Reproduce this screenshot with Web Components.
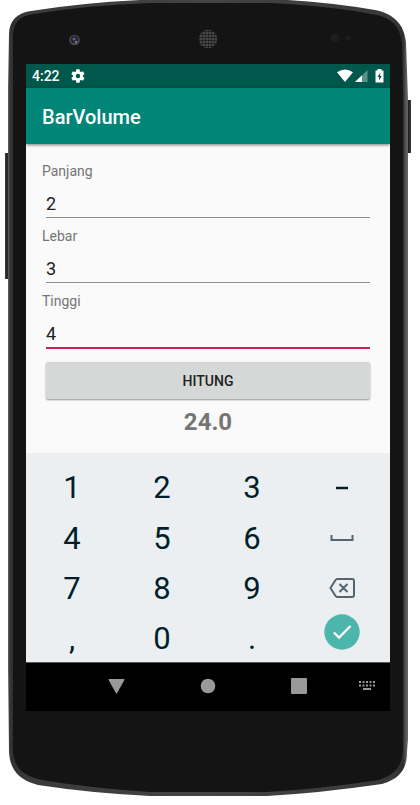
<!DOCTYPE html>
<html lang="id">
<head>
<meta charset="utf-8">
<meta name="viewport" content="width=device-width, initial-scale=1">
<title>BarVolume</title>
<style>
body { margin: 0; background: #fff; font-family: Roboto, "Liberation Sans", sans-serif; }
</style>
</head>
<body>
<device-frame>
  <status-bar time="4:22"></status-bar>
  <app-bar>BarVolume</app-bar>
  <volume-form>
    <text-field label="Panjang" value="2"></text-field>
    <text-field label="Lebar" value="3"></text-field>
    <text-field label="Tinggi" value="4" active></text-field>
  </volume-form>
  <number-pad></number-pad>
  <nav-bar></nav-bar>
</device-frame>
<script>
const define = (name, html, setup) => {
  const template = document.createElement('template');
  template.innerHTML = html;
  customElements.define(name, class extends HTMLElement {
    constructor() {
      super();
      this.attachShadow({ mode: 'open' }).append(template.content.cloneNode(true));
    }
    connectedCallback() { if (setup) setup(this, this.shadowRoot); }
  });
};

define('device-frame', `
<style>
:host { display: block; position: relative; box-sizing: border-box; padding: 64px 30px 94px 26px; }
.shell { position: absolute; inset: 0; width: 100%; height: 100%; z-index: -1; }
main { display: flex; flex-direction: column; background: #fafafa; }
</style>
<svg class="shell" viewBox="0 0 420 805" preserveAspectRatio="none" aria-hidden="true">
  <defs>
    <linearGradient id="side"><stop offset="0" stop-color="#3b3c3d"/><stop offset=".5" stop-color="#222325"/><stop offset="1" stop-color="#3b3c3d"/></linearGradient>
    <linearGradient id="rim" gradientUnits="userSpaceOnUse" x1="8" y1="0" x2="408" y2="0">
      <stop offset="0" stop-color="#666"/><stop offset=".004" stop-color="#3a3a3a"/><stop offset=".01" stop-color="#303030"/>
      <stop offset=".05" stop-color="#3a3a3a"/><stop offset=".5" stop-color="#444"/><stop offset=".96" stop-color="#383838"/>
      <stop offset=".988" stop-color="#2e2e30"/><stop offset=".994" stop-color="#545458"/><stop offset="1" stop-color="#666"/>
    </linearGradient>
    <pattern id="mesh" width="3" height="3" patternUnits="userSpaceOnUse"><rect width="3" height="3" fill="#4a4a4a"/><circle cx="1.5" cy="1.5" r="1.1" fill="#111"/></pattern>
  </defs>
  <path d="M5 153h4v126H5z" fill="url(#side)"/>
  <path d="M406 100h5v53h-5z" fill="url(#side)"/>
  <path d="M8 87L9 34C9 22 16 13 31 11Q80 3 140 0H288Q335 3 375 10C395 14 404 25 406 42L408 100V739L407 752C407 767 402 778 382 784Q320 793 267 796H150Q90 793 38 785C19 780 10 770 9 752L8 667Z" fill="url(#rim)"/>
  <path d="M13 88V38C13 23 19 16 34 14Q90 5 150 3L270 3Q330 6 371 14C394 17 401 28 402 47L403 100V742C403 764 399 773 379 780Q320 789 267 792H150Q90 788 42 780C23 776 14 768 13 750Z" fill="#141414"/>
  <circle cx="74.5" cy="40" r="5.3" fill="#4b4b4d"/><circle cx="74.5" cy="39.5" r="3.7" fill="#222239"/><circle cx="74" cy="39" r="1.5" fill="#5c5c97"/><circle cx="76" cy="42" r="1.2" fill="#777"/>
  <circle cx="208" cy="39" r="9.3" fill="url(#mesh)"/>
  <circle cx="335" cy="38" r="4" fill="#1e1e1f"/><circle cx="348" cy="38" r="2.5" fill="#1d1d1e"/>
</svg>
<main><slot></slot></main>`);

define('status-bar', `
<style>
:host { display: flex; align-items: center; height: 24px; padding: 0 6px; background: #00574b; color: #fff; font-size: 14px; font-weight: 500; }
svg { display: block; fill: #fff; }
.gear { margin-left: 10px; margin-right: auto; }
.signal { margin: 0 7px 0 2px; }
</style>
<span id="time"></span>
<svg class="gear" width="16" height="16" viewBox="0 0 24 24" role="img" aria-label="Settings"><path fill-rule="evenodd" d="M19.4 13a7.800 7.800 0 0 0 0-2l2.100-1.600c.2-.2.3-.5.1-.7l-2-3.400c-.1-.2-.4-.3-.6-.2l-2.500 1a7.300 7.300 0 0 0-1.700-1L14.400 2.400c0-.2-.2-.4-.5-.4h-4c-.2 0-.4.200-.5.400L9 5.100c-.6.300-1.200.6-1.700 1l-2.500-1c-.2-.1-.5 0-.6.200l-2 3.400c-.1.200 0 .5.100.7L4.500 11a7.800 7.800 0 0 0 0 2l-2.200 1.600c-.2.200-.2.500-.1.700l2 3.400c.1.200.4.300.6.200l2.500-1c.5.400 1.100.7 1.700 1l.4 2.700c.1.200.3.400.5.400h4c.3 0 .5-.2.500-.4l.4-2.700c.6-.3 1.200-.6 1.700-1l2.500 1c.2.100.5 0 .6-.2l2-3.400c.2-.2.1-.5-.1-.7L19.400 13zM12 8.700a3.300 3.300 0 1 1 0 6.600 3.300 3.300 0 0 1 0-6.600z"/></svg>
<svg width="16" height="14" viewBox="0 0 16 14" role="img" aria-label="Wi-Fi"><path d="M0 3.200Q8-2 16 3.200L8 13Z"/></svg>
<svg class="signal" width="13" height="14" viewBox="0 0 13 14" role="img" aria-label="Signal"><path d="M12.500 1V13H0Z" opacity=".35"/><path d="M7 6.300V13H0Z"/></svg>
<svg width="9" height="14" viewBox="0 0 9 14" role="img" aria-label="Battery charging"><path fill-rule="evenodd" d="M2.500 0h4v1.500H8q.5 0 .5.500v11q0 .5-.5.500H1q-.5 0-.5-.5V2q0-.5.500-.5h1.500zM5.200 3.800L2.500 8h1.600v3.600L6.800 7H5.200z"/></svg>`,
(host, root) => { root.getElementById('time').textContent = host.getAttribute('time'); });

define('app-bar', `
<style>
:host { display: flex; align-items: center; box-sizing: border-box; height: 56px; padding: 2px 16px 0; background: #008577; color: #fff; box-shadow: 0 1px 3px rgba(0,0,0,.5); z-index: 1; }
h1 { margin: 0; font-size: 20px; line-height: 24px; font-weight: 500; }
</style>
<h1><slot></slot></h1>`);

define('text-field', `
<style>
:host { display: block; }
label { display: block; font-size: 14px; line-height: 20px; color: #757575; }
.box { padding: 0 4px 8px; }
input { display: block; box-sizing: border-box; width: 100%; height: 37px; margin: 0; padding: 8px 0 0; border: 0; border-bottom: 1px solid #8f8f8f; border-radius: 0; outline: 0; background: none; font: 18px/24px Roboto, "Liberation Sans", sans-serif; color: #212121; }
:host([active]) .box { padding-bottom: 7px; }
:host([active]) input { height: 38px; border-bottom: 2px solid #d81b60; }
</style>
<label for="value"></label>
<div class="box"><input id="value" type="text" inputmode="decimal"></div>`,
(host, root) => {
  root.querySelector('label').textContent = host.getAttribute('label');
  root.querySelector('input').value = host.getAttribute('value');
});

define('volume-form', `
<style>
:host { display: block; padding: 17px 16px 14px; }
button { display: block; box-sizing: border-box; width: calc(100% - 8px); height: 37px; margin: 6px 4px; padding: 0; border: 0; border-radius: 2px; background: #d6d8d7; box-shadow: 0 1px 2px rgba(0,0,0,.4); color: #212121; font: 500 14px/20px Roboto, "Liberation Sans", sans-serif; }
output { display: block; text-align: center; font-size: 24px; line-height: 34px; font-weight: 700; color: #757575; }
</style>
<slot></slot>
<button type="button">HITUNG</button>
<output>24.0</output>`,
(host, root) => {
  root.querySelector('button').addEventListener('click', () => {
    const volume = [...host.querySelectorAll('text-field')]
      .reduce((product, field) => product * Number(field.shadowRoot.querySelector('input').value), 1);
    root.querySelector('output').textContent = Number.isInteger(volume) ? volume.toFixed(1) : String(volume);
  });
});

define('number-pad', `
<style>
:host { display: grid; grid-template-columns: repeat(4, 1fr); grid-template-rows: 51px 50px 50px 48px; padding: 10px 3px 0 1px; background: #ebeff2; }
button { display: flex; align-items: center; justify-content: center; height: 50px; margin: 0; padding: 0; border: 0; background: none; color: #001f2a; font: 31px/36px Roboto, "Liberation Sans", sans-serif; }
svg { display: block; fill: none; stroke: #546570; stroke-width: 2; }
.done { align-items: flex-start; }
</style>
<button type="button">1</button><button type="button">2</button><button type="button">3</button>
<button type="button" aria-label="Minus"><svg width="14" height="4" viewBox="0 0 14 4"><path d="M1 2H13" stroke="#001f2a" stroke-width="2.500"/></svg></button>
<button type="button">4</button><button type="button">5</button><button type="button">6</button>
<button type="button" aria-label="Space"><svg width="24" height="10" viewBox="0 0 24 10"><path d="M1.500 1V6H22.500V1"/></svg></button>
<button type="button">7</button><button type="button">8</button><button type="button">9</button>
<button type="button" aria-label="Backspace"><svg width="26" height="22" viewBox="0 0 26 22"><path d="M8 1H23Q25 1 25 3V17Q25 19 23 19H8L6.500 18L1.500 10L6.500 2ZM10.500 6L18.500 14M18.500 6L10.500 14" stroke-linejoin="round"/></svg></button>
<button type="button">,</button><button type="button">0</button><button type="button">.</button>
<button type="button" class="done" aria-label="Done"><svg width="36" height="36" viewBox="0 0 36 36"><circle cx="18" cy="18" r="17.700" fill="#4db6ac" stroke="none"/><path d="M10 18.500L15 23.500L26.500 12" stroke="#fff" stroke-width="2.300"/></svg></button>`);

define('nav-bar', `
<style>
:host { display: grid; grid-template-columns: 45px 1fr 1fr 1fr 46px; height: 48px; border-top: 1px solid #55585a; background: #000; }
button { display: flex; align-items: center; justify-content: center; margin: 0; padding: 0 0 2px; border: 0; background: none; }
svg { display: block; fill: #999; }
.back { grid-column: 2; }
</style>
<button type="button" class="back" aria-label="Back"><svg width="17" height="16" viewBox="0 0 17 16"><path d="M1.200 1H15.800Q17 1 16.400 2L9 15.200Q8.500 16 8 15.200L.6 2Q0 1 1.200 1Z"/></svg></button>
<button type="button" aria-label="Home"><svg width="16" height="16" viewBox="0 0 16 16"><circle cx="8" cy="8" r="7.300"/></svg></button>
<button type="button" aria-label="Recent apps"><svg width="16" height="16" viewBox="0 0 16 16"><rect width="16" height="16" rx="1"/></svg></button>
<button type="button" aria-label="Switch keyboard"><svg width="16" height="10" viewBox="0 0 16 10"><path d="M0 0h2v2H0zM3.500 0h2v2h-2zM7 0h2v2H7zM10.500 0h2v2h-2zM14 0h2v2h-2zM0 3.500h2v2H0zM3.500 3.500h2v2h-2zM7 3.500h2v2H7zM10.500 3.500h2v2h-2zM14 3.500h2v2h-2zM4 7h8v2H4z"/></svg></button>`);
</script>
</body>
</html>
